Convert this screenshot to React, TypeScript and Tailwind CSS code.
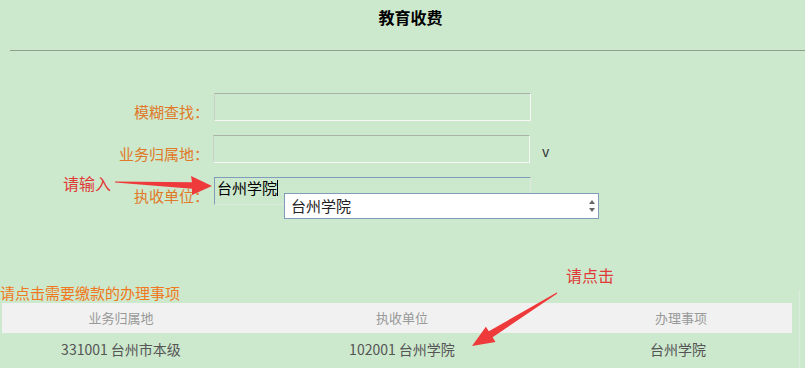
const font = { fontFamily: '"Noto Sans CJK SC", "Liberation Sans", sans-serif' };

const Field = ({ label, children }: { label: string; children?: React.ReactNode }) => (
  <div className="flex items-center h-[28px]">
    <div className="w-[209px] mt-[10px] text-right text-[15px] text-[#e07a28]">{label}</div>
    <div className="ml-[5px] flex items-center">{children}</div>
  </div>
);

export default function App() {
  return (
    <div className="w-[805px] h-[368px] bg-[#cce8cd] overflow-hidden relative" style={font}>
      <div className="h-[33px] pl-[16px] flex items-center justify-center text-[16px] font-bold text-black">教育收费</div>
      <div className="ml-[10px] mt-[17px] h-[2px] border-t border-[#8f9e8f] border-b-[#b8ccb8]" />

      <div className="mt-[41px] flex flex-col gap-[14px]">
        <Field label="模糊查找：">
          <div className="w-[317px] h-[28px] border border-[#f4f7f4] border-t-[#a9b3a9] border-l-[#c8d0c8]" />
        </Field>
        <Field label="业务归属地：">
          <div className="ml-[-1px] w-[317px] h-[28px] border border-[#f4f7f4] border-t-[#a9b3a9] border-l-[#c8d0c8]" />
          <span className="ml-[12px] mt-[4px] text-[14px] text-[#333]">v</span>
        </Field>
        <Field label="执收单位：">
          <div className="relative w-[317px] h-[28px] border border-[#7f9db9] border-b-[#dfe8df] border-r-[#dfe8df]">
            <span className="absolute left-[2px] top-[-1px] text-[15px] text-black">台州学院<span className="inline-block w-px h-[16px] bg-black align-[-2px]" /></span>
          </div>
        </Field>
      </div>

      {/* autocomplete dropdown */}
      <div className="absolute left-[284px] top-[193px] w-[315px] h-[26px] bg-white border border-[#7f9db9] flex items-center">
        <span className="ml-[6px] text-[15px] text-[#222]">台州学院</span>
        <div className="ml-auto mr-[3px] flex flex-col items-center justify-center h-full">
          <svg width="6" height="4" viewBox="0 0 6 4"><path d="M3 0 L6 4 L0 4 Z" fill="#666" /></svg>
          <svg width="6" height="4" viewBox="0 0 6 4" className="mt-[4px]"><path d="M0 0 L6 0 L3 4 Z" fill="#666" /></svg>
        </div>
      </div>

      <div className="absolute left-0 top-[282px] w-[800px]">
        <div className="text-[15px] text-[#f07820] leading-[21px]">请点击需要缴款的办理事项</div>
        <div className="ml-[2px] w-[790px] h-[30px] bg-[#f0f1f0] grid grid-cols-[238px_324px_228px] items-center text-[13px] text-[#999]">
          <div className="text-center">业务归属地</div>
          <div className="text-center">执收单位</div>
          <div className="text-center pl-[6px]">办理事项</div>
        </div>
        <div className="ml-[2px] w-[790px] h-[32px] grid grid-cols-[238px_324px_228px] items-center text-[14px] text-[#555]">
          <div className="text-center">331001 台州市本级</div>
          <div className="text-center">102001 台州学院</div>
          <div className="text-center">台州学院</div>
        </div>
      </div>
      <div className="absolute left-[799px] top-[290px] w-px h-[78px] bg-[#dcebdc]" />

      {/* annotation: 请输入 */}
      <span className="absolute left-[63px] top-[171px] text-[16px] text-[#e03a36]">请输入</span>
      <svg className="absolute left-[110px] top-[170px]" width="104" height="30" viewBox="0 0 104 30">
        <path d="M5 11.5 L82 12.2 L81 6 L102 16 L82 25 L82 18.8 L5 12.5 Z" fill="#ee3a3a" />
      </svg>

      {/* annotation: 请点击 */}
      <span className="absolute left-[566px] top-[263px] text-[16px] text-[#e03a36]">请点击</span>
      <svg className="absolute left-[460px] top-[288px]" width="110" height="65" viewBox="0 0 110 65">
        <path d="M97.3 5.4 L32.6 49.3 L35.5 54 L12 58 L25.9 38.7 L28.8 43.3 L96.7 4.6 Z" fill="#ee3a3a" />
      </svg>
    </div>
  );
}
